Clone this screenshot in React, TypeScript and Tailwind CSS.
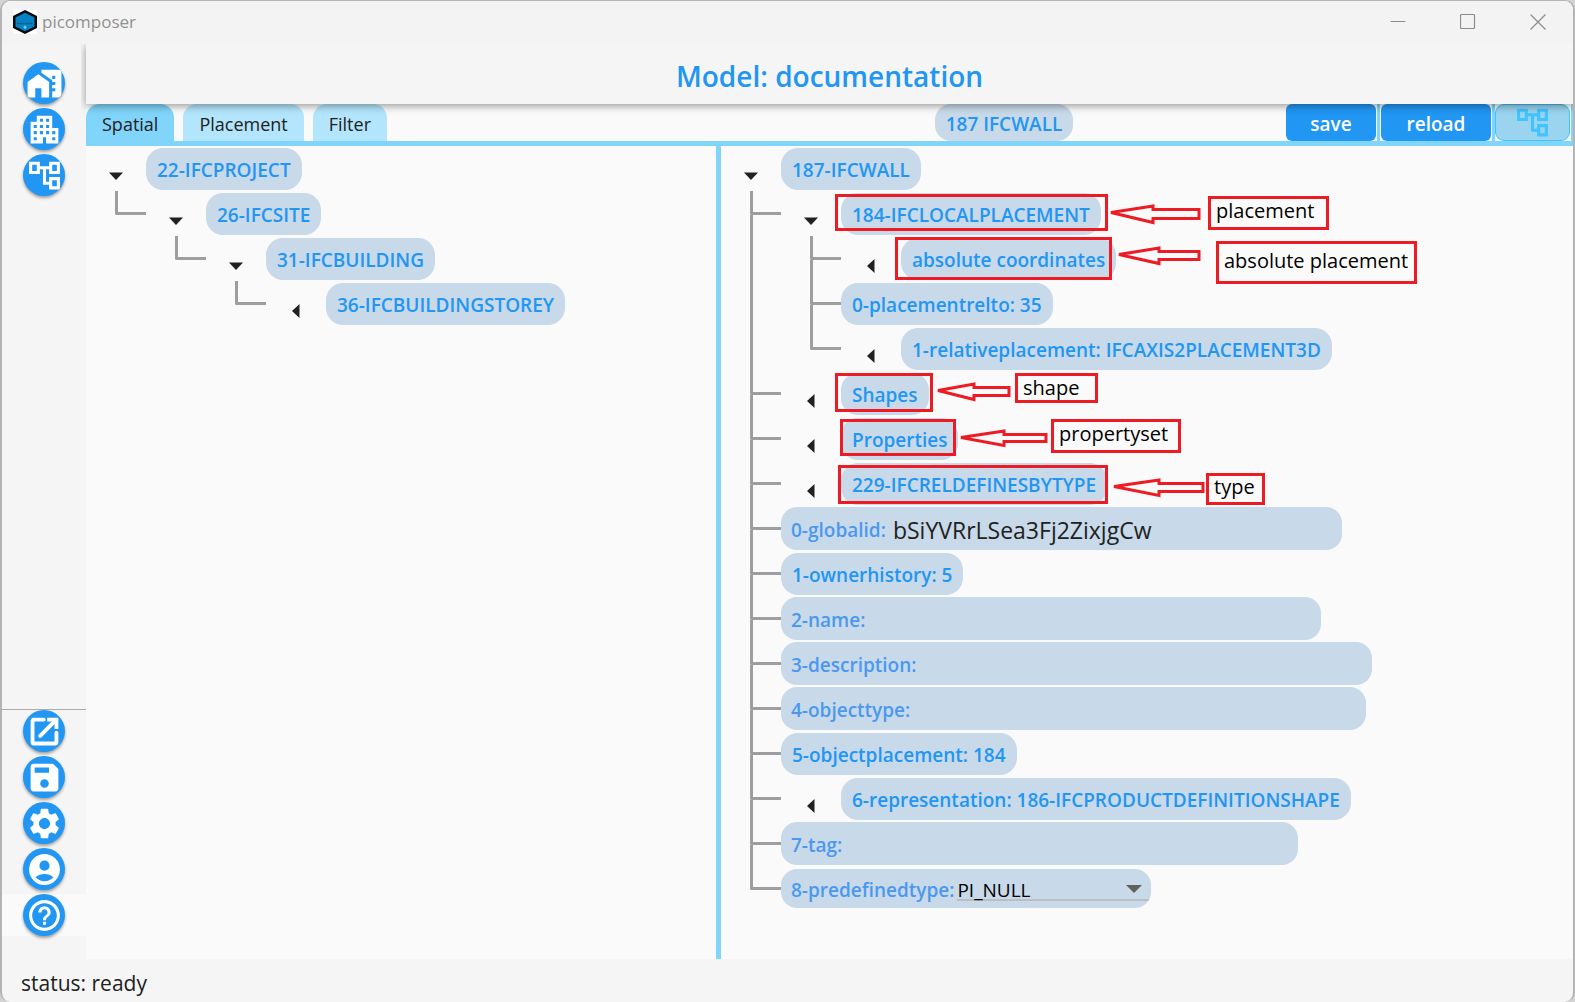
import type { ReactNode } from 'react';
import { MdHomeWork, MdApartment, MdOutlineAccountTree, MdSettings, MdHelpOutline } from 'react-icons/md';

type TreeNode = {
  label: string;
  kind?: 'text' | 'input' | 'select';
  value?: string;
  open?: boolean;
  expandable?: boolean;
  children?: TreeNode[];
};

const spatialTree: TreeNode = {
  label: '22-IFCPROJECT',
  expandable: true,
  open: true,
  children: [
    {
      label: '26-IFCSITE',
      expandable: true,
      open: true,
      children: [
        {
          label: '31-IFCBUILDING',
          expandable: true,
          open: true,
          children: [{ label: '36-IFCBUILDINGSTOREY', expandable: true }],
        },
      ],
    },
  ],
};

const elementTree: TreeNode = {
  label: '187-IFCWALL',
  expandable: true,
  open: true,
  children: [
    {
      label: '184-IFCLOCALPLACEMENT',
      expandable: true,
      open: true,
      children: [
        { label: 'absolute coordinates', expandable: true },
        { label: '0-placementrelto: 35' },
        { label: '1-relativeplacement: IFCAXIS2PLACEMENT3D', expandable: true },
      ],
    },
    { label: 'Shapes', expandable: true },
    { label: 'Properties', expandable: true },
    { label: '229-IFCRELDEFINESBYTYPE', expandable: true },
    { label: '0-globalid:', kind: 'input', value: 'bSiYVRrLSea3Fj2ZixjgCw' },
    { label: '1-ownerhistory: 5' },
    { label: '2-name:', kind: 'input', value: '' },
    { label: '3-description:', kind: 'input', value: '' },
    { label: '4-objecttype:', kind: 'input', value: '' },
    { label: '5-objectplacement: 184' },
    { label: '6-representation: 186-IFCPRODUCTDEFINITIONSHAPE', expandable: true },
    { label: '7-tag:', kind: 'input', value: '' },
    { label: '8-predefinedtype:', kind: 'select', value: 'PI_NULL' },
  ],
};

function Pill({ node }: { node: TreeNode }) {
  const id = 'field-' + node.label.replace(/[^a-z0-9]/gi, '');
  if (node.kind === 'input') {
    return (
      <div className="flex h-[43px] items-center overflow-hidden rounded-[16px] bg-[#c8d9e9] pt-[3px] pl-[10px]">
        <label htmlFor={id} className="text-[19px] font-semibold text-[#4b98ef]">
          {node.label}
        </label>
        <input
          id={id}
          type="text"
          defaultValue={node.value}
          className="w-[456px] bg-transparent pl-[7px] text-[23px] text-[#212121] outline-none"
        />
      </div>
    );
  }
  if (node.kind === 'select') {
    return (
      <div className="flex h-[39px] items-center overflow-hidden rounded-[16px] bg-[#c8d9e9] pt-[3px] pl-[10px]">
        <label htmlFor={id} className="text-[19px] font-semibold text-[#4b98ef]">
          {node.label}
        </label>
        <div className="relative ml-[3px]">
          <div className="absolute inset-x-0 bottom-[3px] h-[2px] bg-[#b9bfc5]" />
          <select
            id={id}
            defaultValue={node.value}
            className="relative block h-7 w-[194px] appearance-none bg-transparent text-[19px] leading-7 font-medium text-black outline-none"
          >
            <option>PI_NULL</option>
          </select>
          <svg viewBox="0 0 16 8" className="pointer-events-none absolute top-[9px] right-[9px] h-2 w-4" fill="#616161">
            <path d="M0 0h16l-8 8z" />
          </svg>
        </div>
      </div>
    );
  }
  return (
    <button
      type="button"
      className="flex h-[42px] items-center rounded-[17px] bg-[#c8d9e9] px-[11px] pt-[3px] text-[19px] font-semibold whitespace-nowrap text-[#2196f3]"
    >
      {node.label}
    </button>
  );
}

function Branch({ node }: { node: TreeNode }) {
  return (
    <div>
      <div className="flex h-[45px] items-center">
        {node.expandable && (
          <button
            type="button"
            aria-label={(node.open ? 'Collapse ' : 'Expand ') + node.label}
            className="flex w-[60px] shrink-0 justify-center pt-[15px]"
          >
            <svg viewBox="0 0 16 16" className="size-4" fill="#212121">
              {node.open ? <path d="M1 4.500h14l-7 7.500z" /> : <path d="M11.500 1v14L4 8z" />}
            </svg>
          </button>
        )}
        <Pill node={node} />
      </div>
      {node.children && (
        <ul>
          {node.children.map((child, i) => (
            <li key={child.label} className="flex">
              <div className="flex w-[60px] shrink-0 flex-col pl-[29px]">
                <div className="h-6 rounded-bl-[2px] border-b-[3px] border-l-[3px] border-[#9e9e9e]" />
                {i < node.children!.length - 1 && <div className="flex-1 border-l-[3px] border-[#9e9e9e]" />}
              </div>
              <Branch node={child} />
            </li>
          ))}
        </ul>
      )}
    </div>
  );
}

function RoundButton({ label, children }: { label: string; children: ReactNode }) {
  return (
    <button
      type="button"
      aria-label={label}
      className="flex size-[42px] items-center justify-center overflow-hidden rounded-full bg-[#2196f3] text-[37px] text-white shadow-[0_2px_3px_rgba(0,0,0,0.35)]"
    >
      {children}
    </button>
  );
}

function OpenExternalIcon() {
  return (
    <svg viewBox="0 0 24 24" width="37" height="37" fill="none" stroke="currentColor" strokeWidth="2.500">
      <path d="M11.500 4.250H5a.75.75 0 0 0-.75.75v14c0 .4.350.75.75.75h14a.75.75 0 0 0 .75-.75v-6.200" strokeLinecap="round" />
      <path d="M15 4.250h4.750V9.200" strokeLinecap="square" strokeWidth="2.500" />
      <path d="M9.200 14.800 19 5" strokeLinecap="round" />
    </svg>
  );
}

function DiskIcon() {
  return (
    <svg viewBox="0 0 24 24" width="37" height="37" fill="currentColor" fillRule="evenodd">
      <path d="M17.500 3H5a2 2 0 0 0-2 2v14a2 2 0 0 0 2 2h14a2 2 0 0 0 2-2V6.500zM5.600 5.500h9.300v3.400H5.600zM12 13.100a2.800 2.800 0 1 1 0 5.600 2.800 2.800 0 0 1 0-5.600z" />
    </svg>
  );
}

function AccountIcon() {
  return (
    <svg viewBox="0 0 24 24" width="37" height="37" fill="currentColor" fillRule="evenodd">
      <path d="M12 2a10 10 0 1 0 0 20 10 10 0 0 0 0-20zm0 4.200a3.300 3.300 0 1 1 0 6.600 3.300 3.300 0 0 1 0-6.600zM6.200 17c3.300-2.700 8.300-2.700 11.600 0-3.300 3.500-8.300 3.500-11.600 0z" />
    </svg>
  );
}

type Note = { text: string; target: string; label: string; arrow: string };

const notes: Note[] = [
  {
    text: 'placement',
    target: 'left-[114px] top-[48px] w-[273px] h-[37px]',
    label: 'left-[487px] top-[50px] w-[121px] h-[34px] pb-[4px]',
    arrow: 'M390 66.500 432 60v3.500h46v9h-46v4z',
  },
  {
    text: 'absolute placement',
    target: 'left-[174px] top-[91px] w-[217px] h-[43px]',
    label: 'left-[495px] top-[95px] w-[201px] h-[43px] pb-[4px]',
    arrow: 'M398 108.500 438 102v3.500h40v8h-40v4z',
  },
  {
    text: 'shape',
    target: 'left-[114px] top-[227px] w-[98px] h-[39px]',
    label: 'left-[294px] top-[227px] w-[83px] h-[30px]',
    arrow: 'M217 244.500 253 238v3.500h35v8h-35v4z',
  },
  {
    text: 'propertyset',
    target: 'left-[119px] top-[273px] w-[116px] h-[37px]',
    label: 'left-[330px] top-[273px] w-[130px] h-[34px] pb-[4px]',
    arrow: 'M240 291.500 283 285v3.500h42v7h-42v4z',
  },
  {
    text: 'type',
    target: 'left-[117px] top-[319px] w-[270px] h-[39px]',
    label: 'left-[485px] top-[327px] w-[59px] h-[32px] pb-[4px]',
    arrow: 'M393 340.500 438 334v3.500h44v8h-44v4z',
  },
];

function Annotations() {
  return (
    <div className="pointer-events-none absolute inset-0 overflow-hidden">
      <svg className="absolute inset-0 size-full" fill="none" stroke="#ed1c24" strokeWidth="3">
        {notes.map((n) => (
          <path key={n.text} d={n.arrow} />
        ))}
      </svg>
      {notes.map((n) => (
        <div key={n.text}>
          <div className={`absolute border-[3px] border-[#ed1c24] ${n.target}`} />
          <div
            className={`absolute flex items-center border-[3px] border-[#ed1c24] pl-[5px] text-[20px] whitespace-nowrap text-black ${n.label}`}
          >
            {n.text}
          </div>
        </div>
      ))}
    </div>
  );
}

export default function App() {
  return (
    <div className="min-h-screen bg-[#d4d4d4] font-['Open_Sans',sans-serif]">
      <div className="flex min-h-screen flex-col overflow-hidden rounded-[10px] border-x-2 border-t border-[#b4b4b4] bg-[#f5f5f5]">
        <header className="flex h-[43px] items-center bg-[#f3f3f3] pb-[2px] pl-[11px]">
          <svg viewBox="0 0 24 24" className="size-6">
            <path fill="#fff" d="M0 0h24v24H0z" />
            <path fill="#050a0e" d="M12 0 24 6v12l-12 6L0 18V6z" />
            <path fill="#0782c4" d="m12 2.800 9.500 4.700v9L12 21.200l-9.500-4.700v-9z" />
            <path stroke="#075a8a" strokeWidth="1.500" d="M4 13.500h16" strokeDasharray="2 .6" />
            <path stroke="#8fe0ff" d="M12 15.500v3.500M10.500 17.200h3" />
          </svg>
          <span className="ml-[5px] text-[17px] text-[#919191]">picomposer</span>
          <div className="ml-auto flex text-[#8c8c8c]">
            <button type="button" aria-label="Minimize" className="flex w-[70px] justify-center">
              <svg viewBox="0 0 16 16" className="size-4" fill="none" stroke="currentColor">
                <path d="M.5 7.500h15" />
              </svg>
            </button>
            <button type="button" aria-label="Maximize" className="flex w-[70px] justify-center">
              <svg viewBox="0 0 16 16" className="size-4" fill="none" stroke="currentColor" strokeWidth="1.200">
                <rect x=".5" y=".5" width="14" height="14" rx="1" />
              </svg>
            </button>
            <button type="button" aria-label="Close" className="flex w-[70px] justify-center">
              <svg viewBox="0 0 16 16" className="size-4" fill="none" stroke="currentColor" strokeWidth="1.200">
                <path d="m.5.5 15 15M15.500.5l-15 15" />
              </svg>
            </button>
          </div>
        </header>

        <div className="flex flex-1">
          <nav className="flex w-[84px] shrink-0 flex-col justify-between pt-[18px] pb-[23px]">
            <div className="flex flex-col items-center gap-1">
              <RoundButton label="Projects">
                <MdHomeWork />
              </RoundButton>
              <RoundButton label="Buildings">
                <MdApartment />
              </RoundButton>
              <RoundButton label="Model tree">
                <MdOutlineAccountTree />
              </RoundButton>
            </div>
            <div className="flex flex-col items-center gap-1 border-t border-[#ababab]">
              <RoundButton label="Open">
                <OpenExternalIcon />
              </RoundButton>
              <RoundButton label="Save file">
                <DiskIcon />
              </RoundButton>
              <RoundButton label="Settings">
                <MdSettings />
              </RoundButton>
              <RoundButton label="Account">
                <AccountIcon />
              </RoundButton>
              <div className="flex w-full justify-center bg-[#fafafa]">
                <RoundButton label="Help">
                  <MdHelpOutline />
                </RoundButton>
              </div>
            </div>
          </nav>

          <main className="flex min-w-0 flex-1 flex-col bg-[#fafafa]">
            <div className="relative z-10 flex h-[60px] items-center justify-center bg-[#f5f5f5] pt-1 shadow-[0_2px_8px_rgba(0,0,0,0.4)] [clip-path:inset(0_0_-12px_-5px)]">
              <h1 className="text-[28px] font-semibold text-[#2196f3]">Model: documentation</h1>
            </div>

            <div className="flex h-[42px] border-b-[5px] border-[#81d4fa]">
              <div className="grid min-w-0 flex-1 grid-cols-[636fr_564fr]">
                <div className="flex gap-[9px] text-[18px] text-[#212121]">
                  <button type="button" className="rounded-t-[14px] bg-[#81d4fa] px-4 pt-[3px]">
                    Spatial
                  </button>
                  <button type="button" className="rounded-t-[14px] bg-[#b3e5fc] px-4 pt-[3px]">
                    Placement
                  </button>
                  <button type="button" className="rounded-t-[14px] bg-[#b3e5fc] px-4 pt-[3px]">
                    Filter
                  </button>
                </div>
                <div className="flex justify-center">
                  <button type="button" className="rounded-[16px] bg-[#c8d9e9] px-[11px] pt-[3px] text-[19px] font-semibold text-[#2196f3]">
                    187 IFCWALL
                  </button>
                </div>
              </div>
              <div className="flex shrink-0 text-[19px] font-semibold text-white">
                <div className="flex border-r-[3px] border-[#81d4fa] pr-px">
                  <button type="button" className="w-[90px] rounded-[6px] bg-[#2196f3] pt-[3px]">
                    save
                  </button>
                </div>
                <div className="flex border-r-[3px] border-[#81d4fa] px-px">
                  <button type="button" className="w-[110px] rounded-[6px] bg-[#2196f3] pt-[3px]">
                    reload
                  </button>
                </div>
                <div className="flex border-r-2 border-[#81d4fa] pr-px">
                  <button
                    type="button"
                    aria-label="Tree view"
                    className="flex w-[75px] items-center justify-center rounded-[9px] border border-[#40c4ff] bg-[#9ad4ef] text-[37px] text-[#40c4ff]"
                  >
                    <MdOutlineAccountTree />
                  </button>
                </div>
              </div>
            </div>

            <div className="grid flex-1 grid-cols-[630fr_5px_852fr]">
              <section aria-label="Spatial structure">
                <Branch node={spatialTree} />
              </section>
              <div className="bg-[#81d4fa]" />
              <section aria-label="Element attributes" className="relative">
                <Branch node={elementTree} />
                <Annotations />
              </section>
            </div>
          </main>
        </div>

        <footer className="flex h-[43px] items-center pt-[6px] pl-[19px] text-[21px] text-[#212121]">status: ready</footer>
      </div>
    </div>
  );
}
